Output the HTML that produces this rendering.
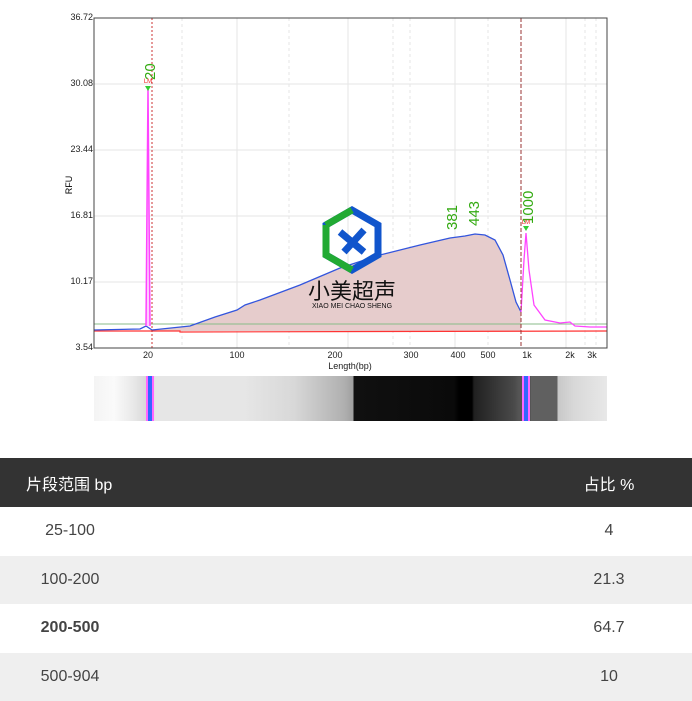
<!DOCTYPE html>
<html><head><meta charset="utf-8"><style>
body{margin:0;width:692px;height:700px;background:#fff;overflow:hidden;font-family:"Liberation Sans","Noto Sans CJK SC",sans-serif;}
.gel{position:absolute;left:94px;top:376px;width:513px;height:45px;background:linear-gradient(to right,#f4f4f4 0px,#fafafa 20px,#e8e8e8 40px,#d8d8d8 52px,#e6e6e6 62px,#e6e6e6 150px,#d8d8d8 200px,#b0b0b0 250px,#a0a0a0 259px,#101010 260px,#0a0a0a 360px,#000 365px,#000 378px,#202020 380px,#4a4a4a 420px,#555 425px,#555 437px,#606060 437px,#606060 463px,#c8c8c8 464px,#d8d8d8 480px,#e8e8e8 513px);}
.band{position:absolute;top:0;height:45px;width:4px;background:#3366ff;border-left:2px solid #ff66ff;border-right:2px solid #ff66ff;}
table{position:absolute;left:0;top:458px;width:692px;border-collapse:collapse;font-size:16px;color:#444;}
th{background:#333;color:#fff;font-weight:normal;height:49px;text-align:left;padding:0 0 0 26px;}
td{height:48.5px;padding:0;}
tr.g td{background:#efefef;}
.c1{width:140px;text-align:center;}
.c3{width:166px;text-align:center;}
</style></head><body>
<svg width="692" height="430" style="position:absolute;left:0;top:0" font-family="Liberation Sans,sans-serif">
<g stroke="#e6e6e6" stroke-width="1">
<line x1="94" y1="84" x2="607" y2="84"/><line x1="94" y1="150" x2="607" y2="150"/><line x1="94" y1="216" x2="607" y2="216"/><line x1="94" y1="282" x2="607" y2="282"/>
<line x1="237" y1="18" x2="237" y2="348"/><line x1="348" y1="18" x2="348" y2="348"/><line x1="455" y1="18" x2="455" y2="348"/><line x1="566" y1="18" x2="566" y2="348"/>
</g>
<g stroke="#e6e6e6" stroke-dasharray="3,3">
<line x1="182" y1="18" x2="182" y2="348"/><line x1="289" y1="18" x2="289" y2="348"/><line x1="393" y1="18" x2="393" y2="348"/><line x1="410" y1="18" x2="410" y2="348"/><line x1="488" y1="18" x2="488" y2="348"/><line x1="585" y1="18" x2="585" y2="348"/><line x1="596" y1="18" x2="596" y2="348"/>
</g>
<path d="M152,330 L190,326 L215,317 L237,310 L245,305 L260,300 L300,285 L340,268 L380,255 L420,245 L450,238 L465,236 L475,234 L485,235 L495,240 L503,255 L510,280 L516,302 L521,312 L521,331 L152,331Z" fill="#e6cccc"/>
<path d="M94,324 L607,324" stroke="#88bb88" stroke-width="1"/>
<path d="M94,331 L180,331 L180,332 L607,331" stroke="#ff3333" stroke-width="1.2" fill="none"/>
<path d="M94,330 L140,329 L146,326 L152,330 L190,326 L215,317 L237,310 L245,305 L260,300 L300,285 L340,268 L380,255 L420,245 L450,238 L465,236 L475,234 L485,235 L495,240 L503,255 L510,280 L516,302 L521,312" stroke="#3355dd" stroke-width="1.3" fill="none"/>
<path d="M521,312 L524,260 L526,233 L529,270 L534,305 L545,320 L560,323 L570,322 L575,326 L590,327 L607,327" stroke="#ff44ff" stroke-width="1.3" fill="none"/>
<path d="M146,326 L148,88 L150,326" stroke="#ff44ff" stroke-width="1.5" fill="#ffccff"/>
<line x1="152" y1="18" x2="152" y2="348" stroke="#cc3333" stroke-dasharray="2,2"/>
<line x1="521" y1="18" x2="521" y2="348" stroke="#993333" stroke-dasharray="4,2"/>
<rect x="94" y="18" width="513" height="330" fill="none" stroke="#444"/>
<g font-size="9" fill="#222" text-anchor="end"><text x="93" y="20">36.72</text><text x="93" y="86">30.08</text><text x="93" y="152">23.44</text><text x="93" y="218">16.81</text><text x="93" y="284">10.17</text><text x="93" y="350">3.54</text></g>
<g font-size="9" fill="#222" text-anchor="middle"><text x="148" y="358">20</text><text x="237" y="358">100</text><text x="335" y="358">200</text><text x="411" y="358">300</text><text x="458" y="358">400</text><text x="488" y="358">500</text><text x="527" y="358">1k</text><text x="570" y="358">2k</text><text x="592" y="358">3k</text><text x="350" y="369">Length(bp)</text></g>
<text transform="translate(72,185) rotate(-90)" font-size="9" text-anchor="middle">RFU</text>
<g font-size="15" fill="#33aa11"><text transform="translate(155,80) rotate(-90)">20</text><text transform="translate(457,230) rotate(-90)">381</text><text transform="translate(479,226) rotate(-90)">443</text><text transform="translate(533,224) rotate(-90)">1000</text></g>
<text x="148" y="83" font-size="6" fill="#ee2222" text-anchor="middle">LM</text><text x="526" y="224" font-size="6" fill="#ee2222" text-anchor="middle">LM</text>
<path d="M145,86 l3,5 l3,-5z" fill="#33cc33"/><path d="M523,226 l3,5 l3,-5z" fill="#33cc33"/>
<g transform="translate(352,240)">
<path d="M0,-30 L26,-15 L26,15 L0,30 L-26,15 L-26,-15Z" fill="none" stroke="#1155cc" stroke-width="7"/>
<path d="M-26,-15 L0,-30 M-26,-15 L-26,15 L0,30" fill="none" stroke="#22aa33" stroke-width="7"/>
<path d="M-12,-8 L12,12 M12,-10 L-8,12" stroke="#1155cc" stroke-width="7"/>
</g>
<text x="352" y="299" font-size="22" text-anchor="middle" fill="#111" font-family="Noto Sans CJK SC,sans-serif">小美超声</text>
<text x="352" y="308" font-size="7" text-anchor="middle" fill="#111">XIAO MEI CHAO SHENG</text>
</svg>
<div class="gel"><div class="band" style="left:52px"></div><div class="band" style="left:428px"></div></div>
<table>
<tr><th colspan="2">片段范围 bp</th><th class="c3" style="text-align:center;padding:0">占比 %</th></tr>
<tr><td class="c1">25-100</td><td></td><td class="c3">4</td></tr>
<tr class="g"><td class="c1">100-200</td><td></td><td class="c3">21.3</td></tr>
<tr><td class="c1" style="font-weight:bold">200-500</td><td></td><td class="c3">64.7</td></tr>
<tr class="g"><td class="c1">500-904</td><td></td><td class="c3">10</td></tr>
</table>
</body></html>
